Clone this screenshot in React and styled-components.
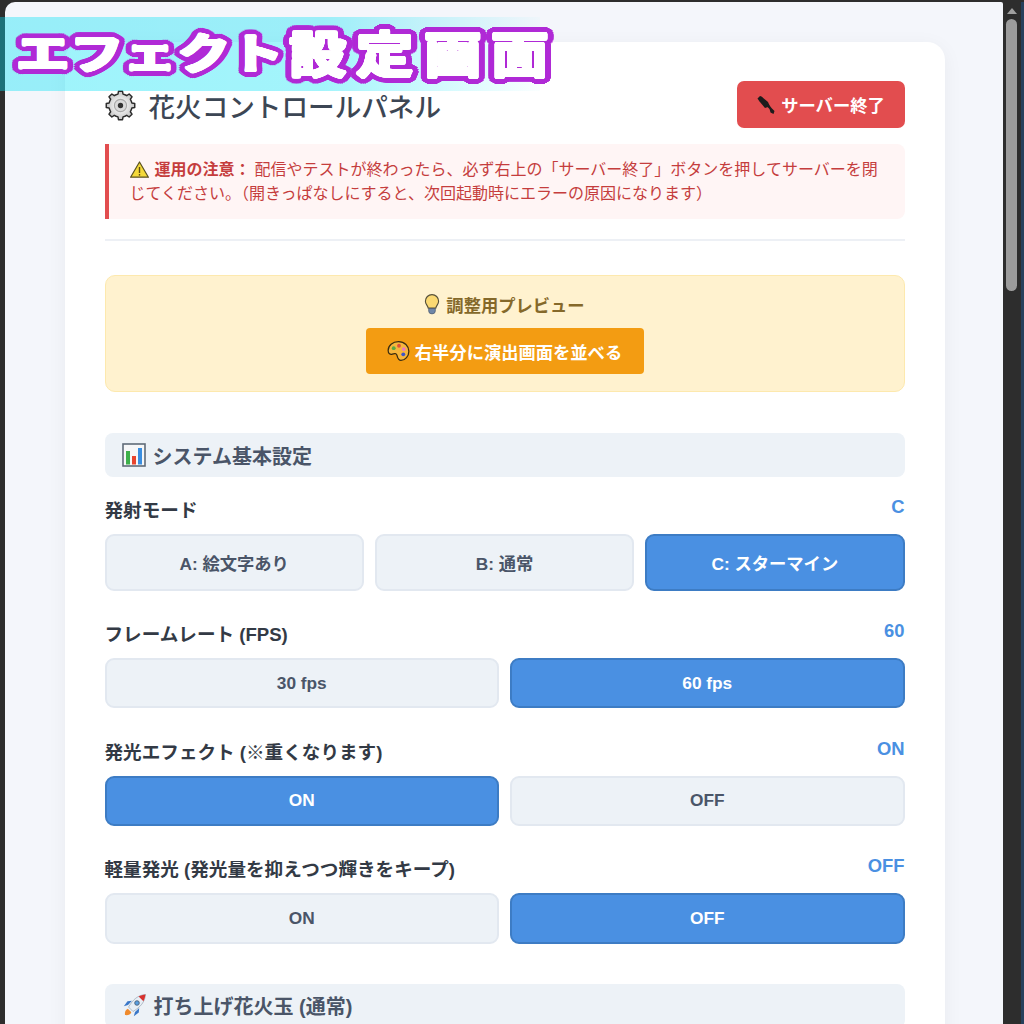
import React from "react";
import styled, { createGlobalStyle } from "styled-components";

const ringShadow = (color, radii) => {
  const out = [];
  radii.forEach((r) => {
    for (let i = 0; i < 24; i++) {
      const a = (i / 24) * Math.PI * 2;
      out.push(`${(Math.cos(a) * r).toFixed(2)}px ${(Math.sin(a) * r).toFixed(2)}px 0 ${color}`);
    }
  });
  return out.join(",");
};

const gearPath = () => {
  const teeth = 8;
  const cx = 14, cy = 14, ro = 13, ri = 10.5;
  let d = "";
  for (let i = 0; i < teeth; i++) {
    const step = (Math.PI * 2) / teeth;
    const a = i * step - Math.PI / 2;
    const pts = [
      [ri, a - step * 0.5],
      [ri, a - step * 0.28],
      [ro, a - step * 0.18],
      [ro, a + step * 0.18],
      [ri, a + step * 0.28],
    ];
    pts.forEach(([r, t], j) => {
      const x = (cx + Math.cos(t) * r).toFixed(2);
      const y = (cy + Math.sin(t) * r).toFixed(2);
      d += `${i === 0 && j === 0 ? "M" : "L"}${x} ${y} `;
    });
  }
  return d + "Z";
};

const Global = createGlobalStyle`
  html, body { margin: 0; padding: 0; height: 1024px; overflow: hidden; background: #2d2d2d; }
  body { font-family: "Liberation Sans", "Noto Sans CJK JP", sans-serif; }
  * { box-sizing: border-box; }
`;

const Shell = styled.div`
  position: relative;
  display: flex;
  width: 1024px;
  height: 1024px;
  padding: 2px 0 0 5px;
  overflow: hidden;
  background: #2d2d2d;
`;

const Page = styled.main`
  flex: 1;
  min-width: 0;
  height: 1100px;
  padding: 40px 58px 0 59.5px;
  background: #f4f6fb;
  border-top-left-radius: 10px;
  border-top-right-radius: 2px;
`;

const ScrollTrack = styled.div`
  flex: none;
  width: 21px;
  display: flex;
  flex-direction: column;
  align-items: flex-start;
  padding: 6px 0 0 3px;
  gap: 5px;
  border-right: 3px solid #26405c;
`;

const ScrollArrow = styled.div`
  width: 0;
  height: 0;
  margin-left: 1px;
  border-left: 5px solid transparent;
  border-right: 5px solid transparent;
  border-bottom: 6px solid #a0a0a0;
`;

const ScrollThumb = styled.div`
  width: 11px;
  height: 272px;
  border-radius: 6px;
  background: #9c9c9c;
`;

const Banner = styled.div`
  position: absolute;
  left: 0;
  top: 17px;
  width: 540px;
  height: 74px;
  background: linear-gradient(90deg, rgba(0, 225, 245, 0.38) 0%, rgba(0, 225, 245, 0.36) 60%, rgba(0, 225, 245, 0.02) 100%);
`;

const BannerText = styled.div`
  position: absolute;
  left: 16px;
  top: 17px;
  height: 74px;
  display: flex;
  align-items: center;
  font-family: "Noto Sans CJK JP", sans-serif;
  font-weight: 700;
  color: #fff;
  text-shadow: ${ringShadow("#fff", [0.8, 1.6])}, ${ringShadow("#b02ad6", [3, 5, 7])};
  white-space: nowrap;
`;

const BannerChar = styled.span`
  display: inline-block;
  width: ${(p) => (p.$big ? 67.5 : 53.5)}px;
  text-align: center;
  font-size: ${(p) => (p.$big ? 50 : 47)}px;
  line-height: 74px;
  transform: translateY(-3px) scale(${(p) => (p.$big ? "1.14, 0.98" : "1.12, 0.9")});
`;

const Card = styled.section`
  width: 880px;
  padding: 39px 40px 40px;
  background: #fff;
  border-radius: 18px;
  box-shadow: 0 4px 20px rgba(0, 0, 0, 0.05);
`;

const Header = styled.header`
  display: flex;
  align-items: center;
  justify-content: space-between;
  height: 47px;
`;

const Title = styled.h1`
  display: flex;
  align-items: center;
  gap: 13px;
  margin: 0;
  padding-top: 1px;
  font-size: 26.6px;
  font-weight: 500;
  color: #3c4654;
`;

const StopButton = styled.button`
  display: flex;
  align-items: center;
  justify-content: center;
  gap: 5px;
  width: 168px;
  height: 47px;
  border: 0;
  border-radius: 7px;
  background: #e24d4f;
  color: #fff;
  font: 700 17.3px "Liberation Sans", "Noto Sans CJK JP", sans-serif;
`;

const Alert = styled.div`
  height: 75px;
  margin-top: 16px;
  padding: 14px 20px 0 21px;
  background: #fff5f5;
  border-left: 4px solid #e24d4f;
  border-radius: 0 8px 8px 0;
  color: #c53d3d;
  font-size: 16px;
  line-height: 24px;
`;

const AlertStrong = styled.strong`
  font-weight: 700;
  margin-right: 4px;
`;

const InlineIcon = styled.svg`
  display: inline-block;
  vertical-align: -3px;
  margin-right: 6px;
`;

const Divider = styled.hr`
  height: 2px;
  margin: 20px 0 34px;
  border: 0;
  background: #edf0f5;
`;

const PreviewBox = styled.div`
  display: flex;
  flex-direction: column;
  align-items: center;
  height: 117px;
  padding-top: 16px;
  background: #fff2cf;
  border: 1px solid #fde9ae;
  border-radius: 10px;
`;

const PreviewTitle = styled.div`
  display: flex;
  align-items: center;
  gap: 6px;
  height: 24px;
  font-size: 17.3px;
  font-weight: 700;
  color: #85692a;
`;

const PreviewButton = styled.button`
  display: flex;
  align-items: center;
  justify-content: center;
  gap: 5px;
  width: 278px;
  height: 46px;
  margin-top: 12px;
  border: 0;
  border-radius: 4px;
  background: #f39c12;
  color: #fff;
  font: 700 17.3px "Liberation Sans", "Noto Sans CJK JP", sans-serif;
`;

const SectionHead = styled.h2`
  display: flex;
  align-items: center;
  gap: 7px;
  height: 44px;
  margin: ${(p) => p.$top}px 0 ${(p) => p.$bottom}px;
  padding-left: 17px;
  background: #edf2f7;
  border-radius: 8px;
  font-size: 20px;
  font-weight: 700;
  color: #4a5568;
`;

const Row = styled.div`
  margin-bottom: 23.2px;
`;

const LabelRow = styled.div`
  display: flex;
  align-items: flex-start;
  justify-content: space-between;
  height: 44px;
`;

const Label = styled.span`
  margin-top: 9px;
  font-size: 18.6px;
  line-height: 24px;
  font-weight: 700;
  color: #333a45;
`;

const Value = styled.span`
  margin-top: 5px;
  font-size: 18.4px;
  line-height: 24px;
  font-weight: 700;
  color: #4a90e2;
`;

const Options = styled.div`
  display: grid;
  grid-template-columns: repeat(${(p) => p.$cols}, 1fr);
  gap: 11px;
`;

const Option = styled.button`
  height: ${(p) => p.$h}px;
  border: 2px solid ${(p) => (p.$on ? "#3d7cc4" : "#e2e8f0")};
  border-radius: 9px;
  background: ${(p) => (p.$on ? "#4a90e2" : "#edf2f7")};
  color: ${(p) => (p.$on ? "#fff" : "#4a5568")};
  font: 700 17.3px "Liberation Sans", "Noto Sans CJK JP", sans-serif;
`;

const GearIcon = () => (
  <svg width="31" height="31" viewBox="0 0 28 28" aria-hidden="true">
    <defs>
      <radialGradient id="gearFill">
        <stop offset="0.3" stopColor="#f4f4f4" />
        <stop offset="1" stopColor="#c4c4c4" />
      </radialGradient>
    </defs>
    <path d={gearPath()} fill="url(#gearFill)" stroke="#2b2b2b" strokeWidth="1.3" strokeLinejoin="round" />
    <circle cx="14" cy="14" r="5.5" fill="#dadada" stroke="#a8a8a8" strokeWidth="1" />
    <circle cx="14" cy="14" r="2.4" fill="#333" />
  </svg>
);

const PlugIcon = () => (
  <svg width="20" height="20" viewBox="0 0 20 20" aria-hidden="true">
    <g fill="#1c1c1c">
      <path d="M1.500 3.500 4 1 5.500 1.500 12 7 13.500 10.500 12 12 9 13 3.500 6.500z" />
      <path d="M10.500 11 12.500 9 15.500 13 18.500 16 17.500 19 14.500 17.500 13.500 14z" />
    </g>
  </svg>
);

const WarnIcon = () => (
  <InlineIcon width="19" height="17" viewBox="0 0 19 17" aria-hidden="true">
    <path d="M9.5 1 18.400 16.200H.6z" fill="#f5d93a" stroke="#5b5220" strokeWidth="1.200" strokeLinejoin="round" />
    <rect x="8.800" y="6" width="1.400" height="6" fill="#5b4a10" />
    <rect x="8.800" y="13" width="1.400" height="1.600" fill="#5b4a10" />
  </InlineIcon>
);

const BulbIcon = () => (
  <svg width="16" height="22" viewBox="0 0 17 22" aria-hidden="true">
    <path d="M8.500 1a7 7 0 0 0-7 7c0 3 2.400 4.600 3 7.400h8c.6-2.800 3-4.400 3-7.400a7 7 0 0 0-7-7z" fill="#fbd972" stroke="#55503a" strokeWidth="1.200" />
    <path d="M5 15.800h7v2.700a3.500 3 0 0 1-7 0z" fill="#6f87a8" stroke="#4c5a70" strokeWidth="0.800" />
  </svg>
);

const PaletteIcon = () => (
  <svg width="23" height="22" viewBox="0 0 24 22" aria-hidden="true">
    <path d="M12 1.200C5.800 1.200 1.200 5.400 1.200 10.400c0 3.200 2.200 4.600 4.400 3.800 2.400-.8 4.200-.6 4.800 1.200.6 2 .8 5.400 4.200 5.400 4.400 0 8.200-4.400 8.200-9.600C22.800 5.800 18.400 1.200 12 1.200z" fill="#f6b63c" stroke="#3a2c10" strokeWidth="1.300" />
    <circle cx="7" cy="8" r="2" fill="#5aa845" />
    <circle cx="12.500" cy="5.500" r="2" fill="#e0503a" />
    <circle cx="17.500" cy="9" r="2" fill="#e87ac0" />
    <circle cx="17" cy="14.500" r="2" fill="#3d55c8" />
  </svg>
);

const ChartIcon = () => (
  <svg width="24" height="24" viewBox="0 0 24 24" aria-hidden="true">
    <rect x="1" y="1" width="22" height="22" fill="#f6f7f8" stroke="#5f6b78" strokeWidth="1.600" />
    <rect x="4" y="8" width="4" height="13.500" fill="#3db04a" />
    <rect x="10" y="13" width="4" height="8.500" fill="#e8442e" />
    <rect x="16" y="5" width="4" height="16.500" fill="#3a8ee0" />
  </svg>
);

const RocketIcon = () => (
  <svg width="25" height="25" viewBox="0 0 25 25" aria-hidden="true">
    <path d="M3 22c-.6-3 .6-5.500 2.800-6.300l3.500 3.500C8.500 21.400 6 22.600 3 22z" fill="#ef8a2c" />
    <path d="M6 12 1.800 13.200l3.700-5 4.500-.4zM13 19l-1.200 4.200 5-3.700.4-4.500z" fill="#3b78c8" />
    <path d="M23.500 1.500c-6.500.6-11 3.700-15 9.500L6.500 14l4.500 4.500 3-2c5.800-4 8.900-8.500 9.500-15z" fill="#e8eef5" stroke="#8a98a8" strokeWidth="0.600" />
    <path d="M23.500 1.500c-2.500.2-4.800.9-6.900 2l4.800 4.800c1.100-2.100 1.800-4.300 2.100-6.800z" fill="#d8322e" />
    <circle cx="15" cy="10" r="2.300" fill="#5a9fe0" stroke="#44566c" strokeWidth="0.800" />
  </svg>
);

const rows = [
  { label: "発射モード", value: "C", h: 56.6, options: ["A: 絵文字あり", "B: 通常", "C: スターマイン"], on: 2 },
  { label: "フレームレート (FPS)", value: "60", h: 50.6, options: ["30 fps", "60 fps"], on: 1 },
  { label: "発光エフェクト (※重くなります)", value: "ON", h: 50.6, options: ["ON", "OFF"], on: 0 },
  { label: "軽量発光 (発光量を抑えつつ輝きをキープ)", value: "OFF", h: 50.6, options: ["ON", "OFF"], on: 1 },
];

export default function App() {
  return (
    <>
      <Global />
      <Shell>
        <Page>
          <Card>
            <Header>
              <Title>
                <GearIcon />
                花火コントロールパネル
              </Title>
              <StopButton>
                <PlugIcon />
                サーバー終了
              </StopButton>
            </Header>
            <Alert>
              <WarnIcon />
              <AlertStrong>運用の注意：</AlertStrong>
              配信やテストが終わったら、必ず右上の「サーバー終了」ボタンを押してサーバーを閉じてください。（開きっぱなしにすると、次回起動時にエラーの原因になります）
            </Alert>
            <Divider />
            <PreviewBox>
              <PreviewTitle>
                <BulbIcon />
                調整用プレビュー
              </PreviewTitle>
              <PreviewButton>
                <PaletteIcon />
                右半分に演出画面を並べる
              </PreviewButton>
            </PreviewBox>
            <SectionHead $top={41} $bottom={13}>
              <ChartIcon />
              システム基本設定
            </SectionHead>
            {rows.map((r) => (
              <Row key={r.label}>
                <LabelRow>
                  <Label>{r.label}</Label>
                  <Value>{r.value}</Value>
                </LabelRow>
                <Options $cols={r.options.length}>
                  {r.options.map((o, i) => (
                    <Option key={o} $h={r.h} $on={i === r.on}>
                      {o}
                    </Option>
                  ))}
                </Options>
              </Row>
            ))}
            <SectionHead $top={40} $bottom={0}>
              <RocketIcon />
              打ち上げ花火玉 (通常)
            </SectionHead>
          </Card>
        </Page>
        <ScrollTrack>
          <ScrollArrow />
          <ScrollThumb />
        </ScrollTrack>
        <Banner />
        <BannerText>
          {"エフェクト".split("").map((c, i) => (
            <BannerChar key={i}>{c}</BannerChar>
          ))}
          {"設定画面".split("").map((c, i) => (
            <BannerChar key={i} $big>
              {c}
            </BannerChar>
          ))}
        </BannerText>
      </Shell>
    </>
  );
}
